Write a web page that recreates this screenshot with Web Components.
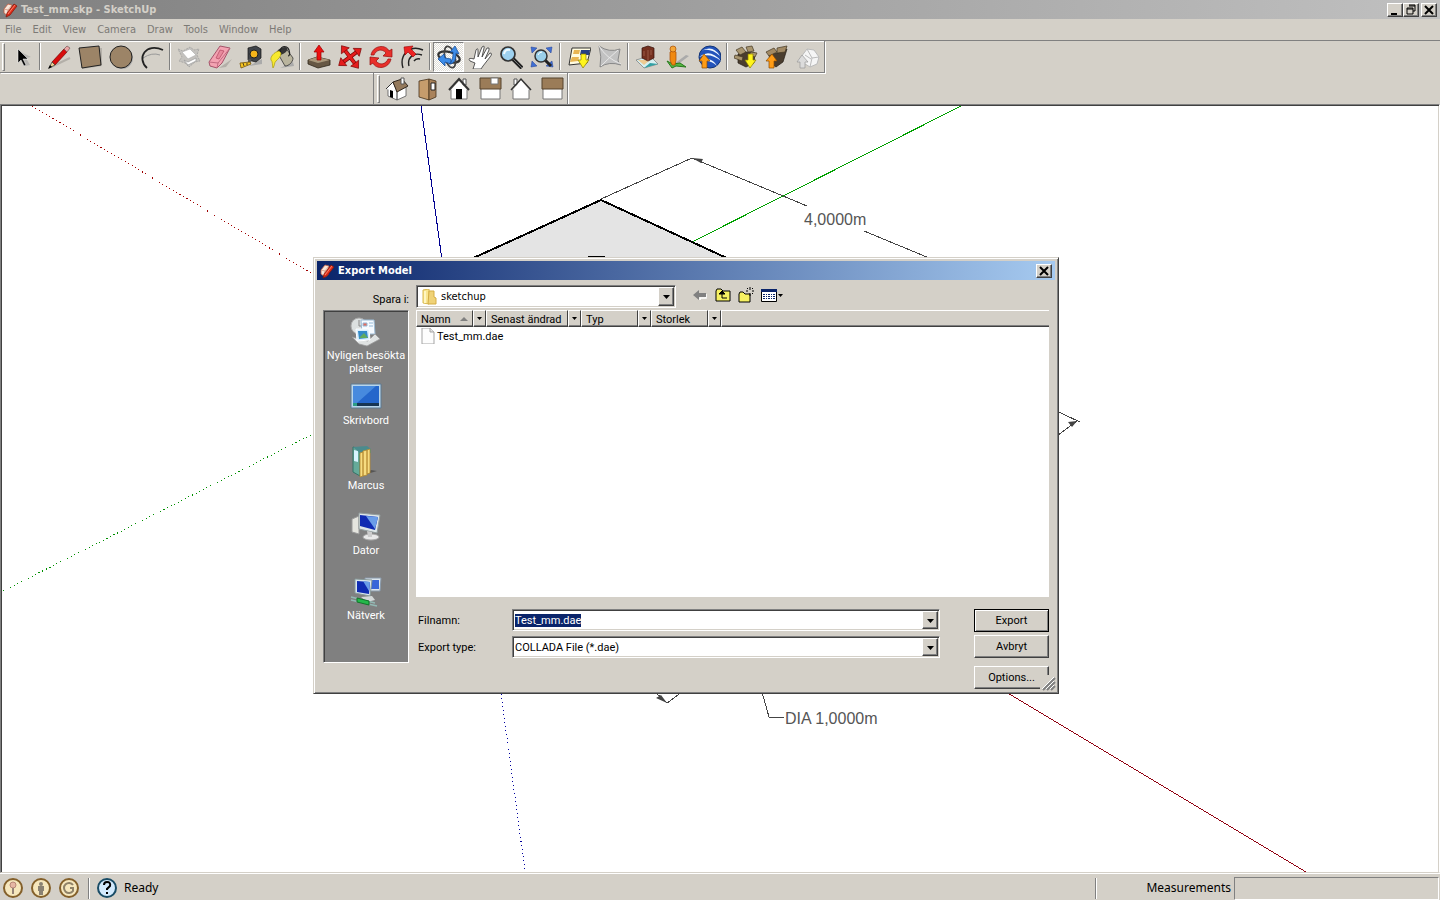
<!DOCTYPE html>
<html lang="sv">
<head>
<meta charset="utf-8">
<title>Test_mm.skp - SketchUp</title>
<style>
  html, body {
    height: 100%;
    margin: 0;
  }

  body {
    --face: #d4d0c8;
    --shade: #808080;
    --dark: #404040;
    --ui: "DejaVu Sans Condensed", "DejaVu Sans", sans-serif;
    --narrow: Roboto, "Liberation Sans", sans-serif;
    background: var(--face);
    font: 11px/13px var(--ui);
    color: #000;
    overflow: hidden;
  }
</style>
</head>
<body>
<sketch-app></sketch-app>

<script>
const house = `<path d="M4 12v10h16v-10" fill="#fff" stroke="#777"/>`;

const icons = {
  logo: [16, `<path d="M2 7l4-5 4 1-1 9-3 2-4-3z" fill="#f8e6da" stroke="#c05a40" stroke-width=".8"/><path d="M2 7l4 1 4-5M6 8v6" fill="none" stroke="#d08a70" stroke-width=".7"/><path d="M12 2l3 2-7 9-4 2 1-4z" fill="#e02a18" stroke="#7c1508" stroke-width=".7"/><path d="M13 3l-7 9" stroke="#ff9a80" stroke-width=".8"/>`],
  select: [24, `<path d="M11 7l4 14 5-1-4-7 5-1z" fill="#999" opacity=".5"/><path d="M8 4v14l3-3 3 6 2-1-3-6h5z" fill="#000" stroke="#fff" stroke-width=".5"/>`],
  line: [24, `<path d="M4 22l19-9" stroke="#b3afa8" stroke-width="2"/><path d="M5 17L17 4l3 3L8 20z" fill="#d80c0c" stroke="#700" stroke-width=".7"/><path d="M17 4l3-3 3 2-3 4z" fill="#eaa5a5" stroke="#755" stroke-width=".7"/><path d="M5 17l3 3-6 3z" fill="#f1d494" stroke="#333" stroke-width=".7"/><path d="M1 24l2-4 2 2z"/>`],
  rect: [24, `<path d="M3 4l21-1v18l-20 3z" fill="#b5b1aa"/><path d="M1 3l20-2 2 19-19 3z" fill="#9c8467" stroke="#222"/>`],
  circle: [24, `<circle cx="13" cy="13" r="11" fill="#aaa"/><circle cx="12" cy="12" r="11" fill="#9c8467" stroke="#222"/>`],
  arc: [24, `<path d="M3 13q9-6 17-3" fill="none" stroke="#999"/><path d="M7 23C-4 13 6-3 23 5" fill="none" stroke="#222" stroke-width="1.8"/>`],
  component: [24, `<path d="M1 4l5 2 7-4 4 3 5-1-2 6 3 6-5 1-6 5-4-4-6-2 3-4z" fill="#c4c2be" stroke="#999" stroke-width=".7" stroke-dasharray="2 1"/><path d="M5 7l8-3 6 6-8 4z" fill="#fff" stroke="#aaa" stroke-width=".6"/><path d="M7 15l4 2 8-4v3l-8 4z" fill="#fff" stroke="#999" stroke-width=".7"/>`],
  eraser: [24, `<path d="M11 23l13-9-6 8z" fill="#b3afa8"/><path d="M1 17L12 1l10 2-8 15-5 5-7-2z" fill="#f3a3b2" stroke="#a4546a"/><path d="M1 17l9 1L22 3M10 18l-1 5" fill="none" stroke="#c26b81"/><path d="M12 5l4 1-5 8-3-1z" fill="#e88a9d" stroke="#b34861" stroke-width=".7"/>`],
  tape: [24, `<path d="M10 21l13-7v5z" fill="#aaa"/><path d="M9 3l8-2 5 3v9l-5 4-8-2z" fill="#40444a" stroke="#111" stroke-width=".7"/><circle cx="15" cy="9" r="4" fill="#f6b51a" stroke="#222"/><path d="M11 14l-1 4" stroke="#555" stroke-width="3"/><path d="M1 18l10-1 1 2-10 4z" fill="#f7c523" stroke="#71520b" stroke-width=".8"/><path d="M4 18l1 3M8 18v2" stroke="#222" stroke-width=".8"/>`],
  paint: [24, `<path d="M10 23l13-6 1 4z" fill="#aaa"/><path d="M7 7l8-5 8 11c0 4-4 8-8 8z" fill="#b9b49d" stroke="#333" stroke-width=".8"/><ellipse cx="12" cy="6" rx="6" ry="3" transform="rotate(-28 12 6)" fill="#333"/><path d="M11 9C8 1 17-1 19 5s-1 6-1 6" fill="none" stroke="#222" stroke-width="1.2"/><path d="M9 6C4 7 0 12 1 15c2 2 1 5 2 8 2-3 1-5 3-7s5-4 5-8z" fill="#f7e92f" stroke="#a8990f" stroke-width=".7"/>`],
  pushpull: [24, `<path d="M1 15l9-3 13 3v5l-12 3-10-4z" fill="#665744" stroke="#2f271b" stroke-width=".8"/><path d="M1 15l9-3 13 3-12 3z" fill="#a9977a"/><path d="M10 15V7H7l5-7 5 7h-3v8z" fill="#ed1111" stroke="#900" stroke-width=".7"/>`],
  move: [24, `<g transform="rotate(8 12 12)"><path d="M5 5l14 14M19 5L5 19" stroke="#7d0606" stroke-width="4"/><path d="M5 5l14 14M19 5L5 19" stroke="#e51c1c" stroke-width="2.6"/><path d="M2 2l8 1-7 7zM22 2l-1 8-7-7zM22 22l-8-1 7-7zM2 22l1-8 7 7z" fill="#e51c1c" stroke="#7d0606" stroke-width=".7"/></g>`],
  rotate: [24, `<path d="M2 10C4 0 17-1 20 6l3-2v8l-9-1 3-3C13 3 7 5 5 10zM22 14c-2 10-15 11-18 4l-3 2v-8l9 1-3 3c4 5 10 3 12-2z" fill="#e8302b" stroke="#960c0c" stroke-width=".7"/>`],
  offset: [24, `<path d="M3 23C-1 10 10-1 23 5M9 21C7 13 13 7 22 10M14 16q2-3 6-2" fill="none" stroke="#222" stroke-width="1.4"/><path d="M4 2l9-1-2 3 5 5-3 3-5-5-3 3z" fill="#ed2222" stroke="#900" stroke-width=".6"/>`],
  orbit: [24, `<ellipse cx="12" cy="12" rx="11" ry="5" transform="rotate(15 12 12)" fill="none" stroke="#333" stroke-width="2.2"/><ellipse cx="13" cy="12" rx="5" ry="11" transform="rotate(-15 13 12)" fill="none" stroke="#444" stroke-width="1.7"/><path d="M13 7l5-6 4 8-3-1c0 7-2 11-7 11 4-4 4-7 4-12zM1 14l6-5 1 4 6 1v5l-6-2v4z" fill="#3d8ce8" stroke="#164e99" stroke-width=".8"/>`],
  pan: [24, `<path d="M5 24l2-6-5-2q-3-4 4-2L8 5q2-3 2 1v6l4-10q3-2 2 1l-2 9 5-9q3-1 2 2l-4 9 5-6q3 0 0 4l-7 9-2 3z" fill="#fff" stroke="#333" stroke-width=".8"/>`],
  zoom: [24, `<path d="M14 14l9 9" stroke="#222" stroke-width="4"/><path d="M14 14l9 9" stroke="#777" stroke-width="1"/><circle cx="9" cy="9" r="7" fill="#9ed1ef" stroke="#333" stroke-width="1.7"/><path d="M5 9q1-5 6-4" fill="none" stroke="#effaff" stroke-width="2"/>`],
  extents: [24, `<g fill="#3f6ed3" stroke="#203e93" stroke-width=".5"><path d="M1 2l6 1-5 5zM22 2l-1 6-5-5zM2 16l5 5-6 1zM22 16l1 6-7-1z"/></g><path d="M14 14l7 7" stroke="#222" stroke-width="3"/><circle cx="11" cy="11" r="6" fill="#9bd0e9" stroke="#333" stroke-width="1.5"/><path d="M8 10q1-3 4-3" fill="none" stroke="#fff"/>`],
  getview: [24, `<path d="M5 3h19l-4 15-18 2z" fill="#fffbe0" stroke="#333"/><path d="M7 5h6l-1 4H6zM5 12h7l-1 4-8 1z" fill="#e8b553"/><path d="M14 5h9l-1 5h-9z" fill="#263f83"/><path d="M14 9h5v6h3l-6 8-5-8h3z" fill="#fff51c" stroke="#8b7d00" stroke-width=".7"/>`],
  terrain: [24, `<path d="M1 1q10 7 21 3l-2 11q0 3 3 5-12-4-21 2 2-10-1-21z" fill="#c2c2c2" stroke="#888"/><path d="M1 1q7 12 22 18M20 5Q12 12 3 21" fill="none" stroke="#e8e8e8"/>`],
  place: [24, `<path d="M1 15l14-4 8 8-14 4z" fill="#d6eff1" stroke="#777" stroke-width=".7"/><path d="M9 23l6-5 8 1z" fill="#31a1a4"/><path d="M3 15l6 5 6-5z" fill="#eeca91"/><path d="M7 3l6-2 6 2v10l-6 3-6-3z" fill="#74301f" stroke="#351008" stroke-width=".7"/><path d="M13 5v11M9 6v5M16 5v5" stroke="#9a5a48"/>`],
  street: [24, `<path d="M8 19l12-9 3 1-12 9z" fill="#aaa"/><path d="M1 16l6 3 7-1 6 4-10-1-4 2z" fill="#55b742" stroke="#26791b"/><path d="M4 7q3-2 6 0v8l-1 5H6l-2-5z" fill="#f08911" stroke="#a74c00" stroke-width=".7"/><circle cx="7" cy="4" r="3" fill="#f4a637" stroke="#a74c00" stroke-width=".7"/>`],
  earth: [24, `<circle cx="13" cy="12" r="11" fill="#2454bb" stroke="#123476"/><path d="M4 6q12-7 19 5Q13 2 4 6zM2 12q11-9 22 4Q13 7 2 12zM3 17q11-7 17 4-7-7-17-4z" fill="#eef7ff"/><path d="M5 23v-7H2l5-7 6 7h-3v7z" fill="#ff9c16" stroke="#8d4c00" stroke-width=".7"/>`],
  getmodel: [24, `<path d="M4 9l8-2 9 1-1 10-8 4-8-4z" fill="#4a3d2e" stroke="#241d15" stroke-width=".7"/><path d="M2 5l6-3 4 5-6 3zM12 2l6-1 2 5-6 1zM17 7l6 1-2 4-6-2zM1 10l8 2-1 4-8-3z" fill="#a8956f" stroke="#443621" stroke-width=".7"/><path d="M14 9h5v6h3l-6 8-5-8h3z" fill="#fff51c" stroke="#8b7d00" stroke-width=".7"/>`],
  sharemodel: [24, `<path d="M4 9l9-1 9-4-4 13-7 5-6-4z" fill="#4a3d2e" stroke="#241d15" stroke-width=".7"/><path d="M1 7l8-4 3 4-8 4zM12 3l10-2-2 6-8 1z" fill="#a28a65" stroke="#443621" stroke-width=".7"/><path d="M4 23v-7H1l6-7 5 7H9v7z" fill="#ff9c16" stroke="#8d4c00" stroke-width=".7"/>`],
  sharecomp: [24, `<path d="M5 12l6-8 7 1 5 7-2 7-7 3-8-5z" fill="#f5f5f5" stroke="#bbb"/><path d="M11 4l5 9 7-1M16 13l-2 9M9 10l6 4" fill="none" stroke="#bbb"/><path d="M4 23v-6H1l5-7 6 7H9v6z" fill="#dcdcdc" stroke="#999" stroke-width=".7"/>`],
  iso: [24, `<path d="M3 10l9 4v9l-9-4zM12 14l9-4v9l-9 4z" fill="#fff" stroke="#555" stroke-width=".8"/><path d="M12 14L8 5l-7 7" fill="#fff" stroke="#333"/><path d="M8 5l9-3 6 7-11 6z" fill="#94795b" stroke="#33291f"/><path d="M5 13l3 1v7l-3-1z"/><path d="M16 1h3v6h-3z" fill="#fff" stroke="#555"/>`],
  top: [24, `<path d="M3 4l10-2v21L3 20z" fill="#c69c6c" stroke="#44311b" stroke-width=".8"/><path d="M13 2l7 2v16l-7 3z" fill="#a9825a" stroke="#44311b" stroke-width=".8"/><path d="M15 6h4v7h-4z" fill="#fff" stroke="#222"/>`],
  front: [24, `${house}<path d="M4 13l8-9 8 9z" fill="#fff"/><path d="M16 2h3v6h-3z" fill="#fff" stroke="#555"/><path d="M2 13L12 2l10 11" fill="none" stroke="#333" stroke-width="2"/><path d="M9 12h6v10H9z"/>`],
  right: [24, `<path d="M3 11h19v11H3z" fill="#fff" stroke="#777"/><path d="M2 1h21v11H2z" fill="#9b7c58" stroke="#55432d"/><path d="M13 1h7v6h-7z" fill="#fff" stroke="#777"/>`],
  back: [24, `<path d="M5 2h3v6H5z" fill="#fff" stroke="#555"/>${house}<path d="M4 13l8-10 8 10z" fill="#fff"/><path d="M2 13L12 2l10 11" fill="none" stroke="#333" stroke-width="1.5"/>`],
  left: [24, `<path d="M3 11h19v11H3z" fill="#fff" stroke="#777"/><path d="M2 1h21v11H2z" fill="#9b7c58" stroke="#55432d"/>`],
  min: [12, `<path d="M2 9h6v2H2z"/>`],
  restore: [12, `<path d="M4 1h6v6H8M2 4h6v6H2zM4 2h6M2 5h6" fill="none" stroke="#000"/>`],
  close: [12, `<path d="M2 2l8 8M10 2l-8 8" stroke="#000" stroke-width="2"/>`],
  down: [7, `<path d="M0 2h7L3.500 6z"/>`],
  downsmall: [5, `<path d="M0 1h5L2.500 4z"/>`],
  sort: [8, `<path d="M0 6h8L4 2z" fill="#808080"/>`],
  folder: [16, `<path d="M2 1l6-1v15l-6-1z" fill="#f9e68f" stroke="#d9b950"/><path d="M8 2h5v6l2 1v6H7z" fill="#efd277" stroke="#d4ad44"/><path d="M4 2v12" stroke="#fff6c1" stroke-width="2"/>`],
  file: [16, `<path d="M2 0h8l4 4v12H2z" fill="#fdfdfd" stroke="#a5a5a5"/><path d="M10 0v4h4" fill="#e4e4e4" stroke="#a5a5a5"/>`],
  goback: [16, `<path d="M8 13v-2h6V7" fill="none" stroke="#fff" stroke-width="1.5"/><path d="M1 8l6-5v3h7v4H7v3z" fill="#808080"/>`],
  up: [16, `<path d="M1 14V4l1-2h4l2 2h7v10z" fill="#f6f162" stroke="#000"/><path d="M7 11V7h-3l3-3 3 3H7M7 11h5" fill="#000" stroke="#000"/>`],
  newfolder: [16, `<path d="M1 15V7l1-2h3l2 2h5v8z" fill="#f6f162" stroke="#000"/><path d="M12 0v3m0 3v3M8 4h2m4 0h2M9 1l1 1m4 4l1 1m0-6l-1 1" stroke="#000"/>`],
  views: [16, `<path d="M.500 2.500h15v12H.500z" fill="#fff" stroke="#000"/><path d="M0 2h16v3H0z" fill="#0a246a"/><path d="M2 7.500h12M2 9.500h12M2 11.500h12" stroke="#0a246a" stroke-dasharray="2 1 1 1"/>`],
  recent: [32, `<circle cx="9" cy="10" r="8" fill="#dce0e0" stroke="#aaa"/><path d="M9 4v6h4" fill="none" stroke="#888"/><path d="M11 4h13l1 14H12z" fill="#f5faff" stroke="#9bbad4"/><path d="M13 7h4v3h-4zM19 7h4M19 10h4" fill="#e86b5b" stroke="#92b8d7"/><path d="M2 21l7 7 8 2 13-7-5-5-7 7-9-2z" fill="#dfe2e2" stroke="#999" stroke-width=".8"/><path d="M6 13h13l1 11-13 1z" fill="#d9efff" stroke="#fff"/><path d="M8 15h9l1 7-9 1z" fill="#348bc9"/><path d="M9 22l5-5 4 5z" fill="#61aa60"/>`],
  desktop: [32, `<path d="M1 3h30v24H1z" fill="#b8d5eb" stroke="#5c7990"/><path d="M3 5h26v17H3z" fill="#2466cb"/><path d="M3 5h23L7 22H3z" fill="#65a8ee" opacity=".55"/><path d="M3 22h26v3H3z" fill="#173553"/><path d="M3 22h4v3H3z" fill="#2b9c85"/>`],
  user: [32, `<path d="M17 28l10-3-6-1z" fill="#555"/><path d="M3 1l7 2v27L3 26z" fill="#66aa99" stroke="#357368"/><path d="M4 4l4 1v11l-4-1z" fill="#d9f3ff"/><path d="M3 1l14-1 4 3v4H10z" fill="#4b8b8d"/><path d="M10 7l3-1v24l-3 1zM13 5l4-1v25l-4 1zM17 4l3-1v24l-3 1z" fill="#f7dc80" stroke="#b4892d" stroke-width=".8"/>`],
  computer: [32, `<path d="M2 8l7-3v18l-7-2z" fill="#e5e5df" stroke="#999"/><path d="M9 2l21 2-3 18-18-4z" fill="#dfe7e9" stroke="#929d9e"/><path d="M10 4l18 2-3 13-15-4z" fill="#102bb2"/><path d="M16 5l12 1-3 12z" fill="#6a9de8"/><ellipse cx="21" cy="26" rx="8" ry="3" fill="#e9e9e9" stroke="#aaa"/><path d="M17 20l5 1v5h-4z" fill="#ccc"/>`],
  network: [32, `<path d="M15 2h16l-1 13H15z" fill="#dce5ec" stroke="#89a"/><path d="M17 4h12v9H17z" fill="#3765d8"/><path d="M5 3l17 1-2 16-15-3z" fill="#dbe7ed" stroke="#899"/><path d="M7 5l13 1-1 12-12-2z" fill="#102bb2"/><path d="M13 5l7 1-1 9z" fill="#6a9de8"/><path d="M11 21l11-1 3 4-8 2z" fill="#d4d8d8"/><path d="M1 24l26 6M1 21l24 6" stroke="#93b9b4" stroke-width="1.5"/><path d="M7 22l12 3v4L7 26z" fill="#24b94b" stroke="#137028"/>`],
  geo: [22, `<circle cx="11" cy="11" r="9" fill="#f6e7bd" stroke="#84602a" stroke-width="2"/><circle cx="11" cy="8" r="3" fill="#e6b7a4" stroke="#b98879"/><path d="M11 11v6" stroke="#968477" stroke-width="2"/>`],
  person: [22, `<circle cx="11" cy="11" r="9" fill="#f6e7bd" stroke="#84602a" stroke-width="2"/><circle cx="11" cy="7" r="2" fill="#8a8172"/><path d="M8 9h6v5h-1v4H9v-4H8z" fill="#8a8172"/>`],
  credit: [22, `<circle cx="11" cy="11" r="9" fill="#f6e7bd" stroke="#84602a" stroke-width="2"/><path d="M15 8a5 5 0 1 0 0 6v-3h-3" fill="none" stroke="#8f8268" stroke-width="2"/>`],
  help: [22, `<circle cx="11" cy="11" r="9" fill="#d3eafd" stroke="#194c66" stroke-width="2"/><path d="M8 8q0-3 3-3 4 0 3 4l-3 3v1" fill="none" stroke="#000" stroke-width="2"/><path d="M10 15h2v2h-2z"/>`],
  grip: [16, `<path d="M3 15L15 3M7 15l8-8M11 15l4-4" stroke="#808080" stroke-width="2"/><path d="M2 14L14 2M6 14l8-8M10 14l4-4" stroke="#fff"/>`]
};

const reset = /* css */`
  * {
    box-sizing: border-box;
  }

  button, input, select {
    font: inherit;
    color: inherit;
    margin: 0;
    padding: 0;
    border: 0;
    border-radius: 0;
    background: none;
    outline: none;
    appearance: none;
  }
`;

const raised = /* css */`
  background: var(--face);
  border: 1px solid;
  border-color: #fff var(--dark) var(--dark) #fff;
  box-shadow: inset -1px -1px var(--shade);
`;

const sunken = /* css */`
  background: #fff;
  border: 1px solid;
  border-color: var(--shade) #fff #fff var(--shade);
  box-shadow: inset 1px 1px var(--dark), inset -1px -1px var(--face);
`;

// Base class: every element only has to supply styles and markup
class SketchElement extends HTMLElement {
  constructor() {
    super();
    this.attachShadow({ mode: "open" });
  }

  connectedCallback() {
    this.shadowRoot.innerHTML = `<style>${reset}${this.constructor.styles}</style>${this.markup()}`;
  }
}

class SketchIcon extends SketchElement {
  static get styles() {
    return /* css */`
      :host { display: inline-block; flex: none; line-height: 0; }
      svg { display: block; }
    `;
  }

  markup() {
    const [box, shapes] = icons[this.getAttribute("name")];
    return `<svg width="${box}" height="${box}" viewBox="0 0 ${box} ${box}" aria-hidden="true">${shapes}</svg>`;
  }
}

class SketchTitle extends SketchElement {
  static get styles() {
    return /* css */`
      :host {
        display: flex;
        align-items: center;
        gap: 3px;
        height: 19px;
        padding: 0 2px;
        font-weight: bold;
        color: var(--face);
        background: linear-gradient(90deg, #808080, #c0c0c0);
      }
      :host([active]) {
        color: #fff;
        background: linear-gradient(90deg, #0a246a, #a6caf0);
      }
      .text { flex: 1; }
      .buttons { display: flex; }
      button {
        ${raised}
        width: 16px;
        height: 14px;
        display: grid;
        place-items: center;
      }
      button[aria-label="Close"] { margin: 0 1px 0 2px; }
    `;
  }

  markup() {
    const buttons = this.getAttribute("buttons").split(" ").map(name => {
      const label = name[0].toUpperCase() + name.slice(1);
      return `<button aria-label="${label}"><sketch-icon name="${name}"></sketch-icon></button>`;
    }).join("");
    return `
      <sketch-icon name="logo"></sketch-icon>
      <span class="text"><slot></slot></span>
      <span class="buttons">${buttons}</span>
    `;
  }
}

class SketchMenu extends SketchElement {
  static get styles() {
    return /* css */`
      :host { display: flex; gap: 11px; height: 21px; padding: 0 5px; color: #7c7a76; }
    `;
  }

  markup() {
    return ["File", "Edit", "View", "Camera", "Draw", "Tools", "Window", "Help"]
      .map(item => `<button>${item}</button>`).join("");
  }
}

class SketchToolbar extends SketchElement {
  static get styles() {
    return /* css */`
      :host {
        display: flex;
        align-items: center;
        width: max-content;
        height: 32px;
        padding: 0 1px 0 2px;
        border: solid var(--shade);
        border-width: 0 1px 1px 0;
        box-shadow: 1px 1px #fff, inset 0 1px #fff;
      }
      .handle {
        width: 3px;
        height: 28px;
        margin-right: 1px;
        border: 1px solid;
        border-color: #fff var(--shade) var(--shade) #fff;
      }
      .sep {
        width: 2px;
        height: 27px;
        margin: 0 2px;
        border-left: 1px solid var(--shade);
        border-right: 1px solid #fff;
      }
      button {
        width: 31px;
        height: 30px;
        display: grid;
        place-items: center;
      }
      button[aria-pressed] {
        border: 1px solid;
        border-color: var(--shade) #fff #fff var(--shade);
        background: repeating-conic-gradient(#fff 0 25%, #dfddd7 0 50%) 0 0 / 2px 2px;
      }
    `;
  }

  markup() {
    const groups = this.getAttribute("tools").split("|").map(group =>
      group.trim().split(" ").map(name =>
        `<button aria-label="${name}" ${name === "orbit" ? 'aria-pressed="true"' : ""}><sketch-icon name="${name}"></sketch-icon></button>`
      ).join(""));
    return `<span class="handle"></span>${groups.join('<span class="sep"></span>')}`;
  }
}

class SketchViewport extends SketchElement {
  static get styles() {
    return /* css */`
      :host {
        display: block;
        min-height: 0;
        background: #fff;
        border: 1px solid;
        border-color: var(--shade) #fff var(--face) var(--shade);
        box-shadow: inset 1px 1px var(--dark), inset -1px 0 var(--face);
        overflow: hidden;
      }
      svg { display: block; width: 100%; height: 100%; }
      .lines { shape-rendering: crispEdges; fill: none; }
      .dim { stroke: #444; }
      text { font: 16px "Liberation Sans", sans-serif; fill: #555; }
    `;
  }

  markup() {
    // model is drawn in window coordinates
    return `
      <svg>
        <g transform="translate(-1 -105)">
          <g class="lines">
            <path d="M32 106L313 274" stroke="#a00000" stroke-dasharray="1 3"/>
            <path d="M3 591L313 434" stroke="#009000" stroke-dasharray="1 3"/>
            <path d="M501 694L525 871" stroke="#0000a0" stroke-dasharray="1 3"/>
            <path d="M421 106L442 260" stroke="#000090"/>
            <path d="M961 106L692 242" stroke="#00a000"/>
            <path d="M1006 692L1306 872" stroke="#900010"/>
            <path d="M469 260L601 200L731 260" fill="#e4e4e4" stroke="#000" stroke-width="2"/>
            <path d="M588 257h17" stroke="#000" stroke-width="2"/>
            <path class="dim" d="M601 199L692 158L807 206M864 231L934 260M1050 408L1080 422M1050 441L1077 421M655 692L667 703L682 692M762 692L769 717H784"/>
          </g>
          <path d="M692 158l11 1-2 4zM1077 421l-9 1 4 5zM667 703l-11-5 5-3z" fill="#444"/>
          <text x="804" y="225">4,0000m</text>
          <text x="785" y="724">DIA 1,0000m</text>
        </g>
      </svg>
    `;
  }
}

class SketchStatus extends SketchElement {
  static get styles() {
    return /* css */`
      :host {
        display: flex;
        align-items: center;
        height: 27px;
        padding: 2px 1px 0 2px;
        font: 12px/16px "Noto Sans", sans-serif;
        border-top: 1px solid #fff;
      }
      .credits { display: flex; gap: 6px; }
      .sep {
        width: 2px;
        height: 21px;
        border-left: 1px solid var(--shade);
        border-right: 1px solid #fff;
      }
      .credits + .sep { margin: 0 6px 0 8px; }
      .ready { flex: 1; padding-left: 6px; }
      label { padding: 0 3px 0 49px; }
      input {
        width: 205px;
        height: 23px;
        border: 1px solid;
        border-color: var(--shade) #fff #fff var(--shade);
      }
    `;
  }

  markup() {
    return `
      <span class="credits">
        <sketch-icon name="geo"></sketch-icon>
        <sketch-icon name="person"></sketch-icon>
        <sketch-icon name="credit"></sketch-icon>
      </span>
      <span class="sep"></span>
      <sketch-icon name="help"></sketch-icon>
      <span class="ready">Ready</span>
      <span class="sep"></span>
      <label for="vcb">Measurements</label>
      <input id="vcb" type="text">
    `;
  }
}

class SketchPlaces extends SketchElement {
  static get styles() {
    return /* css */`
      :host {
        display: flex;
        flex-direction: column;
        padding-top: 5px;
        color: #fff;
        font-family: var(--narrow);
        ${sunken}
        background: var(--shade);
        box-shadow: inset 1px 1px var(--dark);
      }
      button {
        height: 65px;
        display: flex;
        flex-direction: column;
        align-items: center;
        gap: 1px;
      }
    `;
  }

  markup() {
    return [
      ["recent", "Nyligen besökta<br>platser"],
      ["desktop", "Skrivbord"],
      ["user", "Marcus"],
      ["computer", "Dator"],
      ["network", "Nätverk"]
    ].map(([icon, text]) => `<button><sketch-icon name="${icon}"></sketch-icon><span>${text}</span></button>`).join("");
  }
}

class SketchFiles extends SketchElement {
  static get styles() {
    return /* css */`
      :host { display: block; background: #fff; }
      table { width: 100%; table-layout: fixed; border-collapse: collapse; }
      thead { background: var(--face); }
      th { height: 17px; padding: 0; font-weight: normal; }
      th > div { display: flex; height: 17px; }
      th button, .rest {
        border: 1px solid;
        border-color: #fff var(--dark) var(--dark) #fff;
        box-shadow: inset 0 -1px var(--shade);
      }
      .rest { flex: 1; border-right: 0; }
      .name {
        flex: 1;
        display: flex;
        align-items: center;
        gap: 9px;
        padding: 1px 0 0 4px;
        white-space: nowrap;
      }
      .drop { width: 13px; display: grid; place-items: center; }
      td { padding: 1px 0 0 4px; }
      td span { display: flex; align-items: center; gap: 1px; }
      thead td { padding: 0; }
      thead .rest { height: 17px; }
    `;
  }

  markup() {
    const head = (text, extra = "") => `
      <th scope="col"><div>
        <button class="name">${text}${extra}</button>
        <button class="drop" aria-label="Filter ${text}"><sketch-icon name="downsmall"></sketch-icon></button>
      </div></th>`;
    return `
      <table>
        <colgroup><col style="width:70px"><col style="width:95px"><col style="width:70px"><col style="width:70px"><col></colgroup>
        <thead><tr>
          ${head("Namn", '<sketch-icon name="sort"></sketch-icon>')}
          ${head("Senast ändrad")}
          ${head("Typ")}
          ${head("Storlek")}
          <td><div class="rest"></div></td>
        </tr></thead>
        <tbody><tr><td colspan="5"><span><sketch-icon name="file"></sketch-icon>Test_mm.dae</span></td></tr></tbody>
      </table>
    `;
  }
}

class SketchDialog extends SketchElement {
  static get styles() {
    return /* css */`
      :host {
        display: block;
        padding: 2px;
        background: var(--face);
        border: 1px solid;
        border-color: var(--face) var(--dark) var(--dark) var(--face);
        box-shadow: inset 1px 1px #fff, inset -1px -1px var(--shade);
        font-family: var(--narrow);
      }
      sketch-title { margin: 1px 1px 0; font-family: var(--ui); }
      .body {
        display: grid;
        grid-template-columns: 86px 1fr;
        grid-template-rows: 23px 287px auto;
        column-gap: 7px;
        row-gap: 2px;
        padding: 5px 7px 2px;
      }
      .body > label { justify-self: end; padding-top: 8px; }
      sketch-places { grid-row: 2 / 4; margin-bottom: 26px; }
      .look { display: flex; }
      .look .combo { width: 260px; height: 23px; margin-right: 12px; font-family: var(--ui); }
      .look .combo select { padding-left: 23px; }
      .look .combo > .lead { justify-self: start; margin-left: 3px; }
      .look > button { display: flex; align-items: center; justify-content: center; width: 23px; height: 20px; }
      .look > .views { width: 30px; gap: 1px; }
      .combo {
        ${sunken}
        display: grid;
        align-items: center;
        height: 22px;
        padding: 1px;
      }
      .combo > * { grid-area: 1 / 1; }
      .combo select, .combo input { width: 100%; height: 100%; padding-left: 1px; }
      .combo .arrow {
        ${raised}
        justify-self: end;
        width: 16px;
        height: 100%;
        display: grid;
        place-items: center;
      }
      span.arrow { pointer-events: none; }
      ::selection { background: #0a246a; color: #fff; }
      .form {
        display: grid;
        grid-template-columns: 1fr 75px;
        column-gap: 34px;
        padding-top: 10px;
      }
      .fields {
        display: grid;
        grid-template-columns: 94px 1fr;
        grid-auto-rows: 22px;
        row-gap: 5px;
        align-items: center;
        padding-left: 2px;
      }
      .actions { display: flex; flex-direction: column; }
      .actions button { ${raised} height: 23px; margin-bottom: 3px; }
      .actions .default { border-color: #000; box-shadow: inset 1px 1px #fff, inset -1px -1px var(--shade); }
      .actions button:last-child { margin: 5px 0 0; }
      .grip { position: absolute; right: 2px; bottom: 2px; background: var(--face); }
    `;
  }

  markup() {
    const arrow = '<span class="arrow"><sketch-icon name="down"></sketch-icon></span>';
    return `
      <sketch-title active buttons="close">Export Model</sketch-title>
      <div class="body">
        <label for="look">Spara i:</label>
        <div class="look">
          <div class="combo">
            <select id="look"><option>sketchup</option></select>
            <sketch-icon class="lead" name="folder"></sketch-icon>
            ${arrow}
          </div>
          <button aria-label="Back"><sketch-icon name="goback"></sketch-icon></button>
          <button aria-label="Up one level"><sketch-icon name="up"></sketch-icon></button>
          <button aria-label="New folder"><sketch-icon name="newfolder"></sketch-icon></button>
          <button class="views" aria-label="Views"><sketch-icon name="views"></sketch-icon><sketch-icon name="downsmall"></sketch-icon></button>
        </div>
        <sketch-places></sketch-places>
        <sketch-files></sketch-files>
        <div class="form">
          <div class="fields">
            <label for="name">Filnamn:</label>
            <div class="combo">
              <input id="name" type="text" value="Test_mm.dae">
              <button class="arrow" aria-label="Recent names"><sketch-icon name="down"></sketch-icon></button>
            </div>
            <label for="type">Export type:</label>
            <div class="combo">
              <select id="type"><option>COLLADA File (*.dae)</option></select>
              ${arrow}
            </div>
          </div>
          <div class="actions">
            <button class="default">Export</button>
            <button>Avbryt</button>
            <button>Options...</button>
          </div>
        </div>
      </div>
      <sketch-icon class="grip" name="grip"></sketch-icon>
    `;
  }

  connectedCallback() {
    super.connectedCallback();
    const name = this.shadowRoot.querySelector("#name");
    name.focus();
    name.select();
  }
}

class SketchApp extends SketchElement {
  static get styles() {
    return /* css */`
      :host { display: flex; flex-direction: column; height: 100vh; }
      .bars { border-top: 1px solid var(--shade); }
      .second { display: flex; height: 31px; }
      .second::before {
        content: "";
        flex: 0 0 373px;
        border-right: 1px solid var(--shade);
      }
      .second sketch-toolbar {
        height: 31px;
        padding: 0 0 0 3px;
        border-bottom: 0;
        box-shadow: 1px 0 #fff;
      }
      sketch-viewport { flex: 1; }
      sketch-dialog { position: absolute; left: 313px; top: 257px; width: 746px; }
    `;
  }

  markup() {
    return `
      <sketch-title buttons="min restore close">Test_mm.skp - SketchUp</sketch-title>
      <sketch-menu></sketch-menu>
      <div class="bars">
        <sketch-toolbar tools="select | line rect circle arc | component eraser tape paint | pushpull move rotate offset | orbit pan zoom extents | getview terrain | place street earth | getmodel sharemodel sharecomp"></sketch-toolbar>
        <div class="second">
          <sketch-toolbar tools="iso top front right back left"></sketch-toolbar>
        </div>
      </div>
      <sketch-viewport></sketch-viewport>
      <sketch-status></sketch-status>
      <sketch-dialog></sketch-dialog>
    `;
  }
}

customElements.define("sketch-icon", SketchIcon);
customElements.define("sketch-title", SketchTitle);
customElements.define("sketch-menu", SketchMenu);
customElements.define("sketch-toolbar", SketchToolbar);
customElements.define("sketch-viewport", SketchViewport);
customElements.define("sketch-status", SketchStatus);
customElements.define("sketch-places", SketchPlaces);
customElements.define("sketch-files", SketchFiles);
customElements.define("sketch-dialog", SketchDialog);
customElements.define("sketch-app", SketchApp);
</script>
</body>
</html>
